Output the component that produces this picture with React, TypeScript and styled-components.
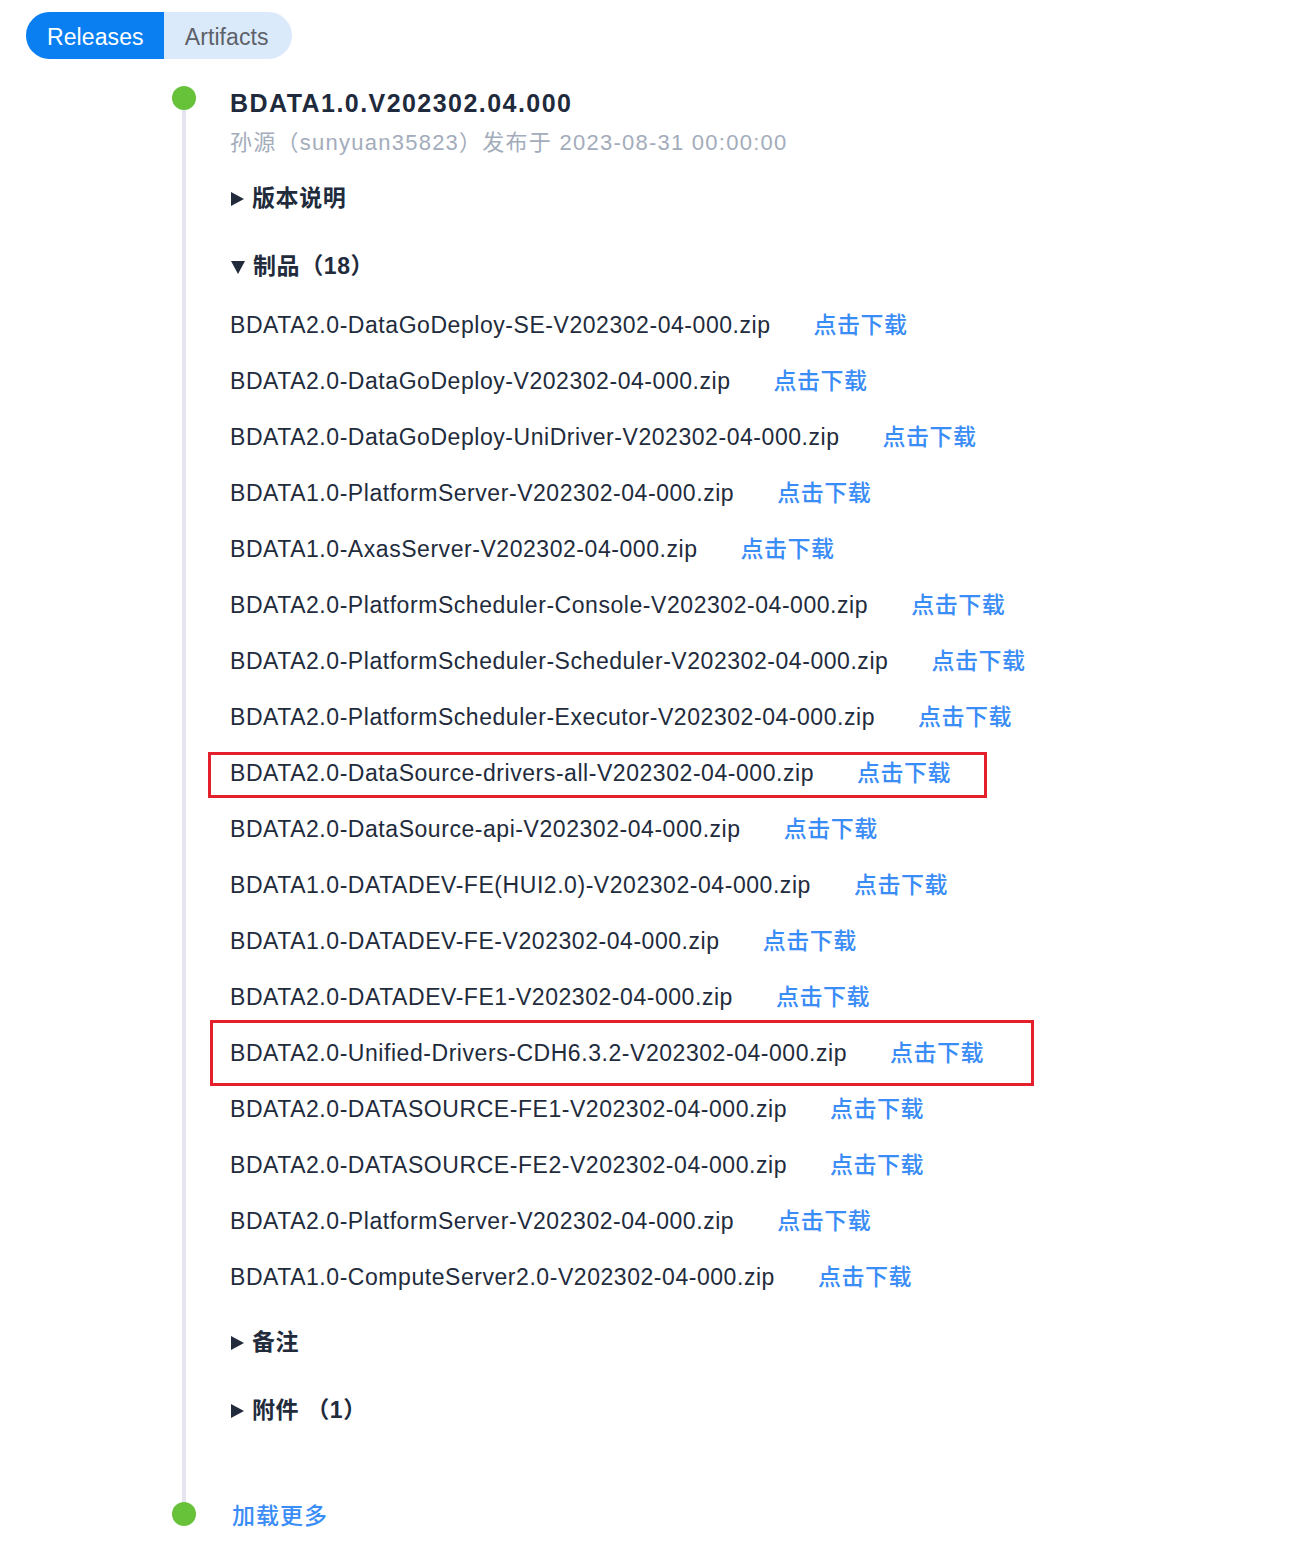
import React from "react";
import styled, { createGlobalStyle, css } from "styled-components";

const GlobalStyle = createGlobalStyle`
  html, body { margin: 0; padding: 0; background: #ffffff; }
  body {
    font-family: "Liberation Sans", Arial, "Noto Sans CJK SC", sans-serif;
    color: #222b3c;
  }
`;

const Page = styled.div`
  width: 1296px;
  min-height: 1558px;
  box-sizing: border-box;
  padding: 12px 0 0 26px;
`;

const TabGroup = styled.div`
  display: inline-flex;
  height: 47px;
  border-radius: 24px;
  overflow: hidden;
  background: #dbeafb;
`;

const Tab = styled.button<{ $active?: boolean }>`
  border: none;
  margin: 0;
  height: 100%;
  padding: 3px ${(p) => (p.$active ? "20px" : "23px")} 0 21px;
  font-family: "Liberation Sans", Arial, sans-serif;
  font-size: 23px;
  letter-spacing: 0.1px;
  cursor: pointer;
  background: ${(p) => (p.$active ? "#0a7ff2" : "transparent")};
  color: ${(p) => (p.$active ? "#ffffff" : "#5d6169")};
`;

const Timeline = styled.div`
  margin: 27px 0 0 146px;
  display: flex;
  flex-direction: column;
`;

const Item = styled.div<{ $last?: boolean }>`
  display: grid;
  grid-template-columns: 24px 1fr;
  column-gap: 34px;
  padding-bottom: ${(p) => (p.$last ? "0" : "78px")};
`;

const Rail = styled.div<{ $last?: boolean }>`
  position: relative;
  ${(p) =>
    !p.$last &&
    css`
      &::after {
        content: "";
        position: absolute;
        left: 10px;
        width: 4px;
        top: 20px;
        bottom: -78px;
        background: #e3e4ee;
      }
    `}
`;

const Dot = styled.div`
  position: relative;
  z-index: 1;
  width: 24px;
  height: 24px;
  border-radius: 50%;
  background: #67c23a;
`;

const Content = styled.div`
  display: flex;
  flex-direction: column;
  align-items: flex-start;
`;

const Title = styled.h2`
  margin: 1px 0 0;
  font-size: 25px;
  line-height: 32px;
  font-weight: 700;
  letter-spacing: 1.45px;
  color: #1f2a3d;
`;

const Meta = styled.div`
  margin-top: 10px;
  font-size: 22px;
  line-height: 28px;
  letter-spacing: 1.25px;
  color: #a3acbb;
`;

const Section = styled.div<{ $first?: boolean }>`
  margin-top: ${(p) => (p.$first ? "27px" : "40px")};
  display: flex;
  flex-direction: column;
  align-items: flex-start;
`;

const SectionHead = styled.div`
  display: flex;
  align-items: center;
  gap: 8px;
  height: 28px;
  line-height: 28px;
  font-size: 23px;
  font-weight: 700;
  letter-spacing: 0.6px;
  color: #222b3c;
`;

const Caret = styled.span<{ $open?: boolean }>`
  display: inline-block;
  width: 0;
  height: 0;
  ${(p) =>
    p.$open
      ? css`
          border-left: 7px solid transparent;
          border-right: 7px solid transparent;
          border-top: 13px solid #222b3c;
          margin: 2px 0 0 1px;
        `
      : css`
          border-top: 7px solid transparent;
          border-bottom: 7px solid transparent;
          border-left: 13px solid #222b3c;
          margin: 1px 0 0 1px;
        `}
`;

const FileList = styled.div`
  margin-top: 17px;
  display: flex;
  flex-direction: column;
  align-items: flex-start;
`;

type Box = { top: number; right: number; bottom: number; left: number };

const FileRow = styled.div<{ $box?: Box }>`
  position: relative;
  display: flex;
  align-items: center;
  height: 56px;
  gap: 43px;
  font-size: 23px;
  line-height: 1;
  letter-spacing: 0.55px;
  ${(p) =>
    p.$box &&
    css`
      &::after {
        content: "";
        position: absolute;
        top: ${p.$box.top}px;
        right: ${p.$box.right}px;
        bottom: ${p.$box.bottom}px;
        left: ${p.$box.left}px;
        border: 3px solid #e3202b;
        pointer-events: none;
      }
    `}
`;

const FileName = styled.span`
  color: #222b3c;
  white-space: nowrap;
`;

const Link = styled.a`
  color: #3a8cf6;
  text-decoration: none;
  white-space: nowrap;
  cursor: pointer;
  font-family: "Noto Sans CJK SC", sans-serif;
  font-weight: 500;
  letter-spacing: 0.5px;
  margin-top: -3px;
`;

const Rest = styled.div`
  margin-top: 23px;
  display: flex;
  flex-direction: column;
  gap: 40px;
`;

const LoadMore = styled.a`
  margin: 0 0 0 2px;
  font-size: 23px;
  line-height: 24px;
  letter-spacing: 1px;
  color: #3a8cf6;
  font-family: "Noto Sans CJK SC", sans-serif;
  font-weight: 500;
  cursor: pointer;
`;

const files: { name: string; box?: Box }[] = [
  { name: "BDATA2.0-DataGoDeploy-SE-V202302-04-000.zip" },
  { name: "BDATA2.0-DataGoDeploy-V202302-04-000.zip" },
  { name: "BDATA2.0-DataGoDeploy-UniDriver-V202302-04-000.zip" },
  { name: "BDATA1.0-PlatformServer-V202302-04-000.zip" },
  { name: "BDATA1.0-AxasServer-V202302-04-000.zip" },
  { name: "BDATA2.0-PlatformScheduler-Console-V202302-04-000.zip" },
  { name: "BDATA2.0-PlatformScheduler-Scheduler-V202302-04-000.zip" },
  { name: "BDATA2.0-PlatformScheduler-Executor-V202302-04-000.zip" },
  {
    name: "BDATA2.0-DataSource-drivers-all-V202302-04-000.zip",
    box: { top: 7, right: -36, bottom: 3, left: -22 },
  },
  { name: "BDATA2.0-DataSource-api-V202302-04-000.zip" },
  { name: "BDATA1.0-DATADEV-FE(HUI2.0)-V202302-04-000.zip" },
  { name: "BDATA1.0-DATADEV-FE-V202302-04-000.zip" },
  { name: "BDATA2.0-DATADEV-FE1-V202302-04-000.zip" },
  {
    name: "BDATA2.0-Unified-Drivers-CDH6.3.2-V202302-04-000.zip",
    box: { top: -5, right: -50, bottom: -5, left: -20 },
  },
  { name: "BDATA2.0-DATASOURCE-FE1-V202302-04-000.zip" },
  { name: "BDATA2.0-DATASOURCE-FE2-V202302-04-000.zip" },
  { name: "BDATA2.0-PlatformServer-V202302-04-000.zip" },
  { name: "BDATA1.0-ComputeServer2.0-V202302-04-000.zip" },
];

export default function App() {
  return (
    <>
      <GlobalStyle />
      <Page>
        <TabGroup>
          <Tab $active>Releases</Tab>
          <Tab>Artifacts</Tab>
        </TabGroup>

        <Timeline>
          <Item>
            <Rail>
              <Dot />
            </Rail>
            <Content>
              <Title>BDATA1.0.V202302.04.000</Title>
              <Meta>孙源（sunyuan35823）发布于 2023-08-31 00:00:00</Meta>

              <Section $first>
                <SectionHead>
                  <Caret />
                  版本说明
                </SectionHead>
              </Section>

              <Section>
                <SectionHead>
                  <Caret $open />
                  制品（18）
                </SectionHead>
                <FileList>
                  {files.map((f) => (
                    <FileRow key={f.name} $box={f.box}>
                      <FileName>{f.name}</FileName>
                      <Link>点击下载</Link>
                    </FileRow>
                  ))}
                </FileList>
              </Section>

              <Rest>
                <SectionHead>
                  <Caret />
                  备注
                </SectionHead>
                <SectionHead>
                  <Caret />
                  附件 （1）
                </SectionHead>
              </Rest>
            </Content>
          </Item>

          <Item $last>
            <Rail $last>
              <Dot />
            </Rail>
            <Content>
              <LoadMore>加载更多</LoadMore>
            </Content>
          </Item>
        </Timeline>
      </Page>
    </>
  );
}
